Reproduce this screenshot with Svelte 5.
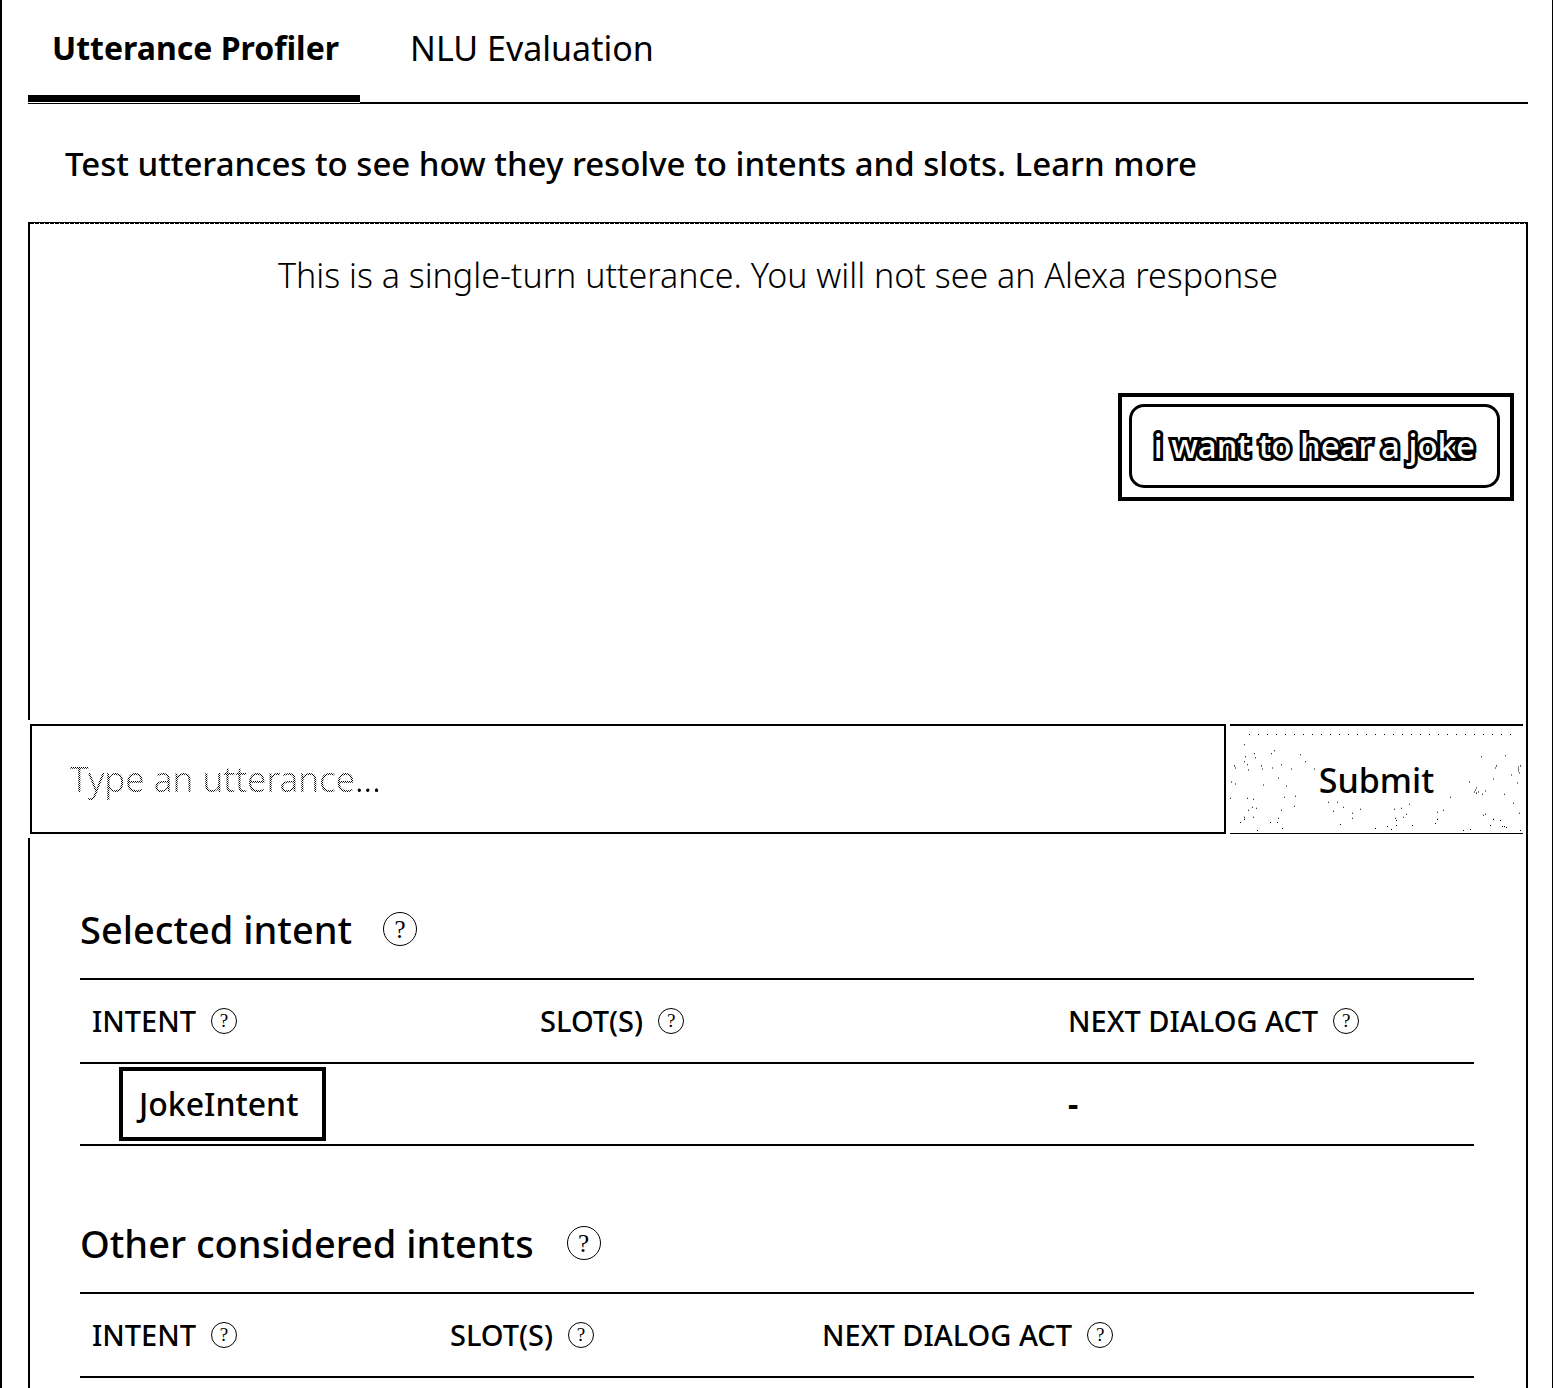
<script>
  let utterance = $state('');

  // Speckle positions on the submit button's face, as [x, y] pairs.
  const grain = [
    [14, 18], [15, 30], [24, 27], [25, 31], [41, 27], [44, 24], [70, 28], [75, 35], [14, 35], [17, 38],
    [18, 43], [31, 39], [32, 42], [42, 41], [51, 38], [61, 42], [84, 42], [4, 39], [5, 41], [48, 51],
    [1, 55], [5, 57], [33, 58], [56, 59], [0, 71], [17, 71], [23, 72], [54, 70], [65, 69], [64, 79],
    [22, 80], [26, 81], [18, 83], [51, 83], [14, 90], [14, 92], [23, 90], [10, 95], [40, 95], [48, 91],
    [47, 95], [27, 103], [52, 101], [98, 75], [107, 75], [113, 80], [103, 84], [122, 86], [122, 91],
    [130, 82], [110, 97], [145, 101], [157, 99], [161, 102], [164, 82], [171, 81], [179, 77], [165, 91],
    [166, 93], [176, 87], [173, 90], [166, 98], [182, 98], [205, 96], [207, 92], [207, 85], [213, 83],
    [220, 70], [239, 55], [251, 30], [275, 29], [266, 39], [265, 41], [263, 52], [281, 48], [287, 56],
    [288, 40], [290, 39], [288, 42], [288, 44], [289, 46], [246, 61], [245, 63], [244, 65], [248, 65],
    [246, 66], [252, 67], [255, 64], [274, 67], [283, 76], [289, 86], [255, 87], [253, 88], [263, 92],
    [270, 93], [260, 98], [272, 99], [274, 99], [276, 100], [290, 103], [233, 103], [240, 102]
  ];
  for (let x = 19; x < 285; x += 9) grain.push([x, 8]);
  const grainPath = grain.map(([x, y]) => `M${x} ${y}h1v1h-1z`).join('');
</script>

{#snippet help(label)}
  <button class="help" type="button" aria-label={`About ${label}`}>?</button>
{/snippet}

{#snippet headings()}
  <thead>
    <tr>
      {#each ['INTENT', 'SLOT(S)', 'NEXT DIALOG ACT'] as name}
        <th scope="col"><span class="label">{name}{@render help(name)}</span></th>
      {/each}
    </tr>
  </thead>
{/snippet}

<main class="page">
  <nav class="tabs">
    <button class="tab active" type="button">Utterance Profiler</button>
    <button class="tab" type="button">NLU Evaluation</button>
  </nav>

  <p class="intro">Test utterances to see how they resolve to intents and slots. <a href="#learn">Learn more</a></p>

  <section class="panel">
    <div class="chat">
      <p class="notice">This is a single-turn utterance. You will not see an Alexa response</p>
      <div class="highlight message"><div class="bubble">i want to hear a joke</div></div>
    </div>

    <form class="entry" onsubmit={(e) => e.preventDefault()}>
      <input type="text" aria-label="Utterance" placeholder="Type an utterance..." bind:value={utterance} />
      <button class="submit" type="submit">
        <svg class="grain" viewBox="0 0 293 106" preserveAspectRatio="none" aria-hidden="true"><path d={grainPath} /></svg>
        Submit
      </button>
    </form>

    <div class="results">
      <h2>Selected intent {@render help('selected intent')}</h2>
      <table class="selected">
        {@render headings()}
        <tbody>
          <tr>
            <td class="picked"><span class="highlight intent">JokeIntent</span></td>
            <td></td>
            <td class="act">-</td>
          </tr>
        </tbody>
      </table>

      <h2 class="other">Other considered intents {@render help('other considered intents')}</h2>
      <table class="considered">
        {@render headings()}
      </table>
    </div>
  </section>
</main>

<style>
  :global(body) {
    background: #fff;
  }
  * {
    box-sizing: border-box;
  }
  .page {
    display: flex;
    flex-direction: column;
    min-height: 100vh;
    padding: 0 24px 0 26px;
    border-left: 2px solid #000;
    border-right: 1px solid #000;
    color: #000;
    font-family: 'Noto Sans', 'Open Sans', sans-serif;
    font-size: 34px;
    font-weight: 500;
    line-height: 44px;
  }
  button,
  input {
    margin: 0;
    padding: 0;
    border: 0;
    border-radius: 0;
    background: none;
    color: inherit;
    font: inherit;
  }
  a {
    color: inherit;
    text-decoration: none;
  }
  .tabs {
    display: flex;
    height: 104px;
    border-bottom: 2px solid #000;
  }
  .tab {
    position: relative;
    padding: 0 24px 6px 50px;
    font-weight: 400;
  }
  .tab.active {
    padding: 0 21px 6px 24px;
    font-size: 32px;
    font-weight: 700;
  }
  .tab.active::after {
    content: '';
    position: absolute;
    inset: auto 0 -1px;
    height: 7px;
    background: #000;
    border-bottom: 1px solid #fff;
  }
  .intro {
    margin: 0;
    padding: 38px 37px 36px;
    font-size: 33px;
  }
  .panel {
    display: flex;
    flex: 1;
    flex-direction: column;
    border-right: 2px solid #000;
  }
  .chat {
    height: 498px;
    padding: 30px 12px 0 0;
    border-top: 1px solid #000;
    border-left: 2px solid #000;
    background: repeating-linear-gradient(90deg, #000 0 4px, #fff 4px 5px) top / 100% 1px no-repeat;
  }
  .notice {
    margin: 0;
    padding-left: 12px;
    font-weight: 300;
    text-align: center;
  }
  .highlight {
    border: 4px solid #000;
  }
  .message {
    width: fit-content;
    margin: 96px 0 0 auto;
    padding: 7px 10px 9px 7px;
  }
  .bubble {
    padding: 17px 22px;
    border: 3px solid #000;
    border-radius: 15px;
    color: #fff;
    font-size: 33px;
    font-weight: 500;
    -webkit-text-stroke: 6px #000;
    paint-order: stroke fill;
  }
  .entry {
    display: flex;
    gap: 4px;
    height: 118px;
    padding: 4px 3px 4px 2px;
  }
  input {
    flex: 1;
    min-width: 0;
    padding: 0 38px;
    border: 2px solid #000;
    outline: 0;
    font-size: 35px;
    font-weight: 300;
  }
  input::placeholder {
    color: transparent;
    opacity: 1;
    background:
      linear-gradient(90deg, transparent 284px, #000 284px),
      repeating-conic-gradient(#000 0 25%, #fff 0 50%) 0 0 / 2px 2px;
    background-clip: text;
    -webkit-background-clip: text;
  }
  .submit {
    position: relative;
    width: 293px;
    border-top: 2px solid #000;
    border-bottom: 1px solid #000;
  }
  .grain {
    position: absolute;
    inset: 0;
    width: 100%;
    height: 100%;
  }
  .results {
    flex: 1;
    padding: 62px 52px 0 50px;
    border-left: 2px solid #000;
  }
  h2 {
    display: flex;
    align-items: center;
    gap: 31px;
    margin: 0 0 20px;
    font-size: 38px;
    font-weight: 500;
    line-height: 58px;
  }
  .other {
    gap: 33px;
    margin-top: 68px;
  }
  .help {
    flex: none;
    width: 34px;
    height: 34px;
    border: 1px solid #000;
    border-radius: 50%;
    font: 25px/34px 'Liberation Serif', serif;
  }
  .label {
    display: flex;
    align-items: center;
    gap: 15px;
  }
  .label .help {
    width: 26px;
    height: 26px;
    font-size: 19px;
    line-height: 24px;
  }
  table {
    width: 100%;
    border-collapse: separate;
    border-spacing: 0;
    border-top: 2px solid #000;
    table-layout: fixed;
  }
  th,
  td {
    height: 84px;
    padding: 0 12px;
    border-bottom: 2px solid #000;
    font-size: 29px;
    font-weight: 500;
    text-align: left;
  }
  td {
    height: 82px;
    font-size: 32px;
  }
  .act {
    font-weight: 700;
  }
  .picked {
    padding: 0 39px;
  }
  .intent {
    display: block;
    width: fit-content;
    padding: 11px 24px 11px 16px;
  }
  .selected th:nth-child(1) {
    width: 32.14%;
  }
  .selected th:nth-child(2) {
    width: 37.88%;
  }
  .considered th:nth-child(1) {
    width: 25.68%;
  }
  .considered th:nth-child(2) {
    width: 26.69%;
  }
</style>
